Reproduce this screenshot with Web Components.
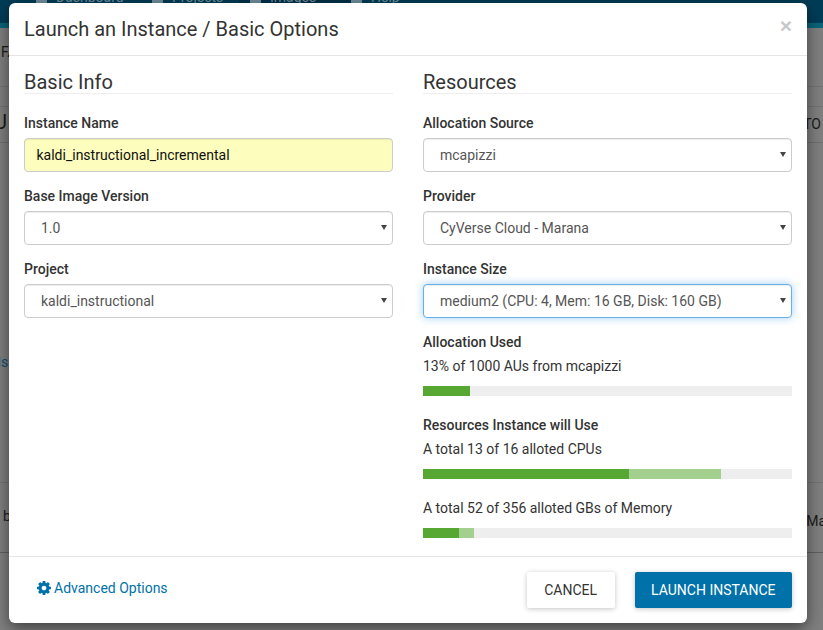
<!DOCTYPE html>
<html>
<head>
<meta charset="utf-8">
<title>Launch an Instance</title>
<style>
  html, body { margin: 0; height: 100%; overflow: hidden; background: #7f7f7f; }
  body { font: 14px/20px Roboto, "Liberation Sans", sans-serif; color: #333; }
</style>
</head>
<body>

<app-backdrop></app-backdrop>

<launch-modal heading="Launch an Instance / Basic Options">
  <div slot="left">
    <form-section heading="Basic Info">
      <form-field label="Instance Name"><text-field value="kaldi_instructional_incremental"></text-field></form-field>
      <form-field label="Base Image Version"><select-field value="1.0"></select-field></form-field>
      <form-field label="Project"><select-field value="kaldi_instructional"></select-field></form-field>
    </form-section>
  </div>
  <div slot="right">
    <form-section heading="Resources">
      <form-field label="Allocation Source"><select-field value="mcapizzi"></select-field></form-field>
      <form-field label="Provider"><select-field value="CyVerse Cloud - Marana"></select-field></form-field>
      <form-field label="Instance Size"><select-field value="medium2 (CPU: 4, Mem: 16 GB, Disk: 160 GB)" focused></select-field></form-field>
      <usage-meter heading="Allocation Used" text="13% of 1000 AUs from mcapizzi" used="12.7"></usage-meter>
      <usage-meter heading="Resources Instance will Use" text="A total 13 of 16 alloted CPUs" used="55.9" added="24.9"></usage-meter>
      <usage-meter text="A total 52 of 356 alloted GBs of Memory" used="9.8" added="4"></usage-meter>
    </form-section>
  </div>
  <advanced-link slot="footer-left">Advanced Options</advanced-link>
  <flat-button slot="footer-right">CANCEL</flat-button>
  <flat-button slot="footer-right" primary>LAUNCH INSTANCE</flat-button>
</launch-modal>

<script>
// what is left visible of the page behind the dialog, already tinted by the overlay
class AppBackdrop extends HTMLElement {
  constructor() {
    super();
    this.attachShadow({mode: "open"}).innerHTML = `<style>
      :host { display: block; height: 630px; overflow: hidden; color: #1a1a1a; }
      nav { height: 23px; background: #003c56; color: #6f8c99; display: grid; grid-template-columns: 116px 87px 112px auto; padding-left: 36px; overflow: hidden; }
      nav div { display: flex; gap: 9px; margin-top: -13px; line-height: 20px; height: 36px; }
      nav i { width: 11px; height: 14px; margin-top: 2px; background: #6f8c99; flex: none; }
      nav .active { background: #003048; padding-left: 11px; }
      .strip { height: 5px; background: #0a6478; }
      .row { display: flex; justify-content: space-between; box-sizing: border-box; overflow: hidden; }
      .r1 { height: 59px; border-bottom: 1px solid #727272; padding: 14px 0 0 1px; }
      .r2 { height: 20px; border-bottom: 1px solid #727272; }
      .r3 { height: 36px; border-bottom: 1px solid #6f6f6f; padding-right: 2px; }
      .r4 { height: 340px; border-bottom: 1px solid #727272; padding: 209px 0 0 0; }
      .r5 { height: 70px; border-bottom: 1px solid #5f5f5f; padding: 23px 0 0 3px; }
      .u { font-size: 20px; margin: 5px 0 0 -6px; }
      .to { margin-top: 7px; }
      .ls { color: #0a4e72; margin-left: -2.5px; }
      .ma { margin: 5px -3px 0 0; }
    </style>
    <nav>
      <div><i></i><span>Dashboard</span></div>
      <div><i></i><span>Projects</span></div>
      <div class="active"><i></i><span>Images</span></div>
      <div><i></i><span>Help</span></div>
    </nav>
    <div class="strip"></div>
    <div class="row r1"><span>FA</span></div>
    <div class="row r2"></div>
    <div class="row r3"><span class="u">U</span><span class="to">TO</span></div>
    <div class="row r4"><span class="ls">ls</span></div>
    <div class="row r5"><span>b</span><span class="ma">Ma</span></div>`;
  }
}
customElements.define("app-backdrop", AppBackdrop);

class LaunchModal extends HTMLElement {
  constructor() {
    super();
    const shadowRoot = this.attachShadow({mode: "open"});
    shadowRoot.innerHTML = `<style>
      :host { display: block; position: absolute; left: 9px; top: 3px; width: 798px; height: 620px; background: #fff; border-radius: 6px; box-shadow: 0 5px 15px rgba(0,0,0,.5); }
      .wrap { height: 100%; display: flex; flex-direction: column; }
      header { height: 52px; border-bottom: 1px solid #e5e5e5; display: flex; justify-content: space-between; align-items: center; padding: 0 15px; flex: none; }
      h4 { margin: 0; font-weight: 400; font-size: 20px; line-height: 22px; color: #333; }
      .close { font: bold 21px/21px "Liberation Sans", sans-serif; color: #c8c8c8; margin-top: -7px; }
      main { flex: 1; min-height: 0; display: grid; grid-template-columns: 369px 369px; gap: 30px; padding: 0 15px; }
      footer { height: 66px; border-top: 1px solid #e5e5e5; display: flex; justify-content: space-between; align-items: center; padding: 0 15px 0 28px; flex: none; }
      .actions { display: flex; gap: 20px; }
    </style>
    <div class="wrap">
      <header><h4></h4><span class="close">×</span></header>
      <main><slot name="left"></slot><slot name="right"></slot></main>
      <footer><slot name="footer-left"></slot><div class="actions"><slot name="footer-right"></slot></div></footer>
    </div>`;
    shadowRoot.querySelector("h4").textContent = this.getAttribute("heading");
  }
}
customElements.define("launch-modal", LaunchModal);

class FormSection extends HTMLElement {
  constructor() {
    super();
    const shadowRoot = this.attachShadow({mode: "open"});
    shadowRoot.innerHTML = `<style>
      :host { display: block; }
      h2 { margin: 14px 0 19px; font-weight: 400; font-size: 20px; line-height: 24px; color: #333; border-bottom: 1px solid #eee; height: 23px; }
    </style>
    <h2></h2><slot></slot>`;
    shadowRoot.querySelector("h2").textContent = this.getAttribute("heading");
  }
}
customElements.define("form-section", FormSection);

class FormField extends HTMLElement {
  constructor() {
    super();
    const shadowRoot = this.attachShadow({mode: "open"});
    shadowRoot.innerHTML = `<style>
      :host { display: block; margin-bottom: 14px; }
      label { display: block; font-weight: 500; line-height: 20px; margin-bottom: 5px; color: #333; }
    </style>
    <label></label><slot></slot>`;
    shadowRoot.querySelector("label").textContent = this.getAttribute("label");
  }
}
customElements.define("form-field", FormField);

class TextField extends HTMLElement {
  constructor() {
    super();
    const shadowRoot = this.attachShadow({mode: "open"});
    shadowRoot.innerHTML = `<style>
      :host { display: block; height: 34px; box-sizing: border-box; border: 1px solid #ccc; border-radius: 4px; background: #fdfdbd; color: #111; padding: 6px 11.5px; line-height: 20px; box-shadow: inset 0 1px 1px rgba(0,0,0,.075); }
    </style><span></span>`;
    shadowRoot.querySelector("span").textContent = this.getAttribute("value");
  }
}
customElements.define("text-field", TextField);

class SelectField extends HTMLElement {
  constructor() {
    super();
    const shadowRoot = this.attachShadow({mode: "open"});
    shadowRoot.innerHTML = `<style>
      :host { display: block; position: relative; }
      select { display: block; width: 100%; height: 34px; box-sizing: border-box; appearance: none; border: 1px solid #ccc; border-radius: 4px; background: #fff; color: #555; padding: 6px 20px 6px 16px; font: inherit; box-shadow: inset 0 1px 1px rgba(0,0,0,.075); outline: none; }
      select.focused { border-color: #66afe9; box-shadow: inset 0 1px 1px rgba(0,0,0,.075), 0 0 8px rgba(102,175,233,.6); }
      svg { position: absolute; right: 6px; top: 14px; width: 6px; height: 5px; fill: #444; pointer-events: none; }
    </style><select><option></option></select><svg viewBox="0 0 6 5"><path d="M0 0h6L3 5z"/></svg>`;
    shadowRoot.querySelector("option").textContent = this.getAttribute("value");
    if (this.hasAttribute("focused")) shadowRoot.querySelector("select").classList.add("focused");
  }
}
customElements.define("select-field", SelectField);

class UsageMeter extends HTMLElement {
  constructor() {
    super();
    const shadowRoot = this.attachShadow({mode: "open"});
    shadowRoot.innerHTML = `<style>
      :host { display: block; margin-bottom: 19px; }
      h5 { margin: 0 0 4px; font-size: 14px; line-height: 20px; font-weight: 500; color: #333; }
      p { margin: 0 0 10px; line-height: 20px; color: #333; }
      .bar { display: flex; height: 10px; background: #eee; }
      .used { background: #56a833; }
      .added { background: #a3cf8f; }
    </style>
    <h5></h5><p></p><div class="bar"><div class="used"></div><div class="added"></div></div>`;
    const h5 = shadowRoot.querySelector("h5");
    if (this.hasAttribute("heading")) h5.textContent = this.getAttribute("heading");
    else h5.remove();
    shadowRoot.querySelector("p").textContent = this.getAttribute("text");
    shadowRoot.querySelector(".used").style.width = this.getAttribute("used") + "%";
    shadowRoot.querySelector(".added").style.width = (this.getAttribute("added") || 0) + "%";
  }
}
customElements.define("usage-meter", UsageMeter);

class AdvancedLink extends HTMLElement {
  constructor() {
    super();
    this.attachShadow({mode: "open"}).innerHTML = `<style>
      :host { display: inline-flex; align-items: center; gap: 4px; color: #0071a9; margin-top: -4px; }
      svg { width: 14px; height: 14px; fill: currentColor; margin-right: -1px; }
    </style>
    <svg viewBox="128 128 1536 1536"><path d="M1152 896q0-106-75-181t-181-75-181 75-75 181 75 181 181 75 181-75 75-181zm512-109v222q0 12-8 23t-20 13l-185 28q-19 54-39 91 35 50 107 138 10 12 10 25t-9 23q-27 37-99 108t-94 71q-12 0-26-9l-138-108q-44 23-91 38-16 136-29 186-7 28-36 28h-222q-14 0-24.5-8.5t-11.5-21.5l-28-184q-49-16-90-37l-141 107q-10 9-25 9-14 0-25-11-126-114-165-168-7-10-7-23 0-12 8-23 15-21 51-66.5t54-70.5q-27-50-41-99l-183-27q-13-2-21-12.5t-8-23.5v-222q0-12 8-23t19-13l186-28q14-46 39-92-40-57-107-138-10-12-10-24 0-10 9-23 26-36 98.5-107.5t94.5-71.5q13 0 26 10l138 107q44-23 91-38 16-136 29-186 7-28 36-28h222q14 0 24.5 8.5t11.5 21.5l28 184q49 16 90 37l142-107q9-9 24-9 13 0 25 10 129 119 165 170 7 8 7 22 0 12-8 23-15 21-51 66.5t-54 70.5q26 50 41 98l183 28q13 2 21 12.5t8 23.5z"/></svg>
    <slot></slot>`;
  }
}
customElements.define("advanced-link", AdvancedLink);

class FlatButton extends HTMLElement {
  constructor() {
    super();
    this.attachShadow({mode: "open"}).innerHTML = `<style>
      :host { display: block; height: 36px; line-height: 36px; padding: 0 17.5px; background: #fff; color: #333; border-radius: 2px; font-size: 14px; box-shadow: 0 1px 6px rgba(0,0,0,.12), 0 1px 4px rgba(0,0,0,.12); }
      :host([primary]) { background: #0071a9; color: #fff; padding: 0 16.5px; }
    </style><slot></slot>`;
  }
}
customElements.define("flat-button", FlatButton);
</script>
</body>
</html>
